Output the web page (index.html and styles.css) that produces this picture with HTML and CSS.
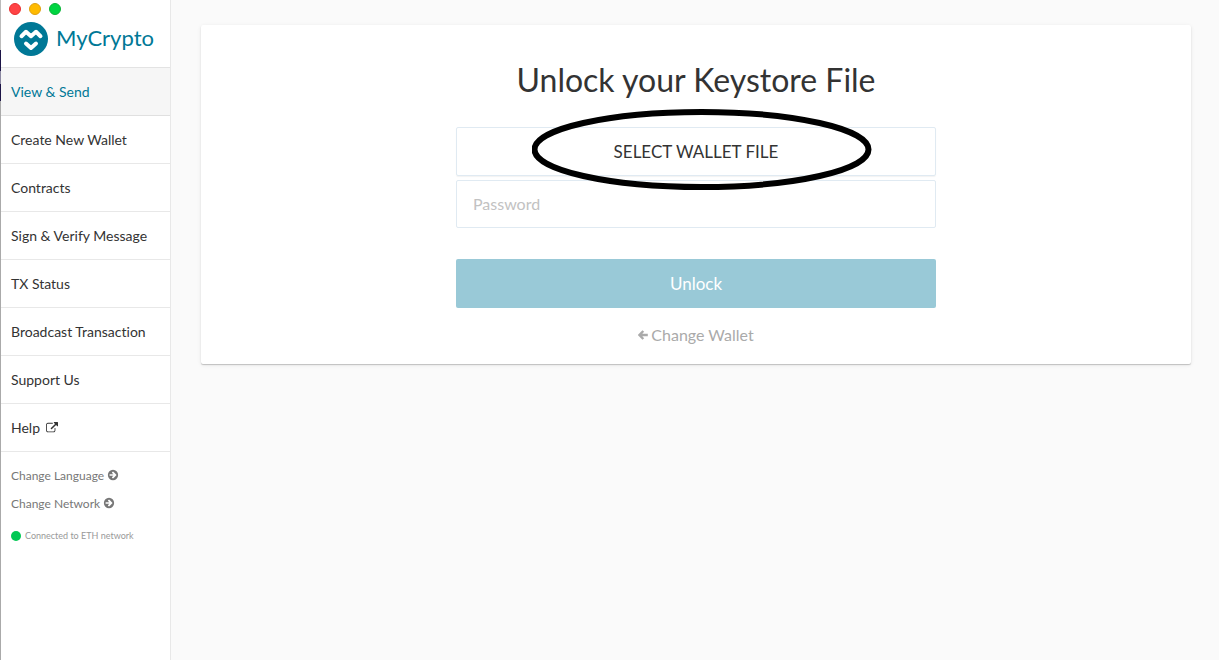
FILE: index.html
```html
<!DOCTYPE html>
<html lang="en">
<head>
<meta charset="utf-8">
<title>MyCrypto</title>
<link rel="stylesheet" href="styles.css">
</head>
<body>
<div class="app">
  <div class="desktop-edge"></div>
  <aside class="sidebar">
    <header class="sidebar-header">
      <div class="window-controls">
        <button class="dot dot-close" type="button" aria-label="Close"></button>
        <button class="dot dot-minimize" type="button" aria-label="Minimize"></button>
        <button class="dot dot-zoom" type="button" aria-label="Zoom"></button>
      </div>
      <a class="logo" href="#">
        <svg class="logo-mark" viewBox="0 0 34 34" aria-hidden="true">
          <circle cx="17" cy="17" r="17" fill="#007896"/>
          <path d="M7.500 14.200 L12 9.800 L17 14.200 L22 9.800 L26.500 14.200" fill="none" stroke="#fff" stroke-width="4" stroke-linecap="round" stroke-linejoin="round"/>
          <path d="M12 21.500 L17 26 L22 21.500" fill="none" stroke="#fff" stroke-width="4" stroke-linecap="round" stroke-linejoin="round"/>
        </svg>
        <span class="logo-text">MyCrypto</span>
      </a>
    </header>
    <nav class="nav">
      <a class="nav-item active" href="#">View &amp; Send</a>
      <a class="nav-item" href="#">Create New Wallet</a>
      <a class="nav-item" href="#">Contracts</a>
      <a class="nav-item" href="#">Sign &amp; Verify Message</a>
      <a class="nav-item" href="#">TX Status</a>
      <a class="nav-item" href="#">Broadcast Transaction</a>
      <a class="nav-item" href="#">Support Us</a>
      <a class="nav-item" href="#">Help
        <svg class="icon-external" viewBox="0 0 1792 1792" aria-hidden="true"><path fill="currentColor" d="M1408 928v320q0 119-84.500 203.500t-203.500 84.500h-832q-119 0-203.500-84.500t-84.500-203.500v-832q0-119 84.500-203.500t203.500-84.500h704q14 0 23 9t9 23v64q0 14-9 23t-23 9h-704q-66 0-113 47t-47 113v832q0 66 47 113t113 47h832q66 0 113-47t47-113v-320q0-14 9-23t23-9h64q14 0 23 9t9 23zm384-864v512q0 26-19 45t-45 19-45-19l-176-176-652 652q-10 10-23 10t-23-10l-114-114q-10-10-10-23t10-23l652-652-176-176q-19-19-19-45t19-45 45-19h512q26 0 45 19t19 45z"/></svg>
      </a>
    </nav>
    <div class="options">
      <button class="option" type="button">Change Language
        <svg class="icon-circle" viewBox="0 0 1792 1792" aria-hidden="true"><path fill="currentColor" fill-rule="evenodd" d="M896 128a768 768 0 1 0 0 1536a768 768 0 1 0 0-1536zM1413 896q0 27-18 45l-362 362-91 91q-18 18-45 18t-45-18l-91-91q-18-18-18-45t18-45l189-189h-502q-26 0-45-19t-19-45v-128q0-26 19-45t45-19h502l-189-189q-19-19-19-45t19-45l91-91q18-18 45-18t45 18l91 91 362 362q18 18 18 45z"/></svg>
      </button>
      <button class="option" type="button">Change Network
        <svg class="icon-circle" viewBox="0 0 1792 1792" aria-hidden="true"><path fill="currentColor" fill-rule="evenodd" d="M896 128a768 768 0 1 0 0 1536a768 768 0 1 0 0-1536zM1413 896q0 27-18 45l-362 362-91 91q-18 18-45 18t-45-18l-91-91q-18-18-18-45t18-45l189-189h-502q-26 0-45-19t-19-45v-128q0-26 19-45t45-19h502l-189-189q-19-19-19-45t19-45l91-91q18-18 45-18t45 18l91 91 362 362q18 18 18 45z"/></svg>
      </button>
    </div>
    <p class="status"><span class="status-dot"></span>Connected to ETH network</p>
  </aside>
  <main class="main">
    <section class="card">
      <h1 class="title">Unlock your Keystore File</h1>
      <form class="form">
        <div class="select-wrap">
          <button class="select-file" type="button">SELECT WALLET FILE</button>
          <svg class="highlight" viewBox="0 0 340 81" aria-hidden="true"><ellipse cx="169.500" cy="40.500" rx="167" ry="37.500" fill="none" stroke="#000" stroke-width="6"/></svg>
        </div>
        <input class="password" type="password" placeholder="Password" aria-label="Password">
        <button class="unlock" type="submit" disabled>Unlock</button>
      </form>
      <button class="change-wallet" type="button">
        <svg class="icon-arrow" viewBox="0 0 10 10" aria-hidden="true"><path d="M5.300 1 L1.500 5 L5.300 9 M2 5 H9.800" fill="none" stroke="currentColor" stroke-width="2.400"/></svg>
        Change Wallet
      </button>
    </section>
  </main>
</div>
</body>
</html>
```

FILE: styles.css
```css
* {
  box-sizing: border-box;
}

body {
  margin: 0;
  background: #fafafa;
  color: #333;
  font-family: Lato, "Open Sans", sans-serif;
  font-size: 14px;
  font-variant-ligatures: none;
}

a {
  color: inherit;
  text-decoration: none;
}

button {
  border: 0;
  background: none;
  padding: 0;
  color: inherit;
  font: inherit;
}

.app {
  display: flex;
  min-height: 100vh;
}

.desktop-edge {
  width: 1px;
  background: linear-gradient(#bbb 0 50px, #1c1446 50px 71px, #8a87a0 71px 84px, #1c1446 84px 101px, #aaa 101px);
}

.sidebar {
  width: 170px;
  flex: none;
  background: #fff;
  border-right: 1px solid #e8e8e8;
}

.sidebar-header {
  height: 68px;
  border-bottom: 1px solid #e3e3e3;
}

.window-controls {
  display: flex;
  gap: 8px;
  padding: 3px 8px 0;
}

.dot {
  width: 12px;
  height: 12px;
  border-radius: 50%;
  border: 1px solid;
}

.dot-close {
  background: #ff4345;
  border-color: #e8302f;
}

.dot-minimize {
  background: #ffbb00;
  border-color: #dfa010;
}

.dot-zoom {
  background: #00d541;
  border-color: #0ab337;
}

.logo {
  display: flex;
  align-items: center;
  gap: 8px;
  padding: 7px 0 0 13px;
  color: #007896;
}

.logo-mark {
  width: 34px;
  height: 34px;
}

.logo-text {
  padding-bottom: 2px;
  font-size: 22px;
  line-height: 32px;
}

.nav-item {
  display: flex;
  align-items: center;
  gap: 6px;
  height: 48px;
  padding-left: 10px;
  border-bottom: 1px solid #e8e8e8;
  line-height: 20px;
}

.nav-item.active {
  background: #f6f6f6;
  border-color: #e0e0e0;
  color: #007896;
}

.icon-external {
  width: 12px;
  height: 12px;
}

.options {
  padding: 9px 0 0 10px;
}

.option {
  display: flex;
  align-items: center;
  gap: 3px;
  height: 28px;
  color: #777;
  font-size: 12px;
}

.icon-circle {
  width: 12px;
  height: 12px;
}

.status {
  display: flex;
  align-items: center;
  gap: 4px;
  margin: 9px 0 0;
  padding-left: 10px;
  color: #999;
  font-size: 9px;
  line-height: 20px;
}

.status-dot {
  width: 10px;
  height: 10px;
  border-radius: 50%;
  background: #00c853;
}

.main {
  flex: 1;
  padding: 25px 28px 25px 30px;
}

.card {
  display: flex;
  flex-direction: column;
  align-items: center;
  padding: 35px 16px 17px;
  background: #fff;
  border-radius: 2px;
  box-shadow: 0 1px 1px rgba(0, 0, 0, 0.2), 0 1px 4px rgba(0, 0, 0, 0.08);
}

.title {
  margin: 0 0 27px;
  font-size: 32px;
  font-weight: 400;
  line-height: 40px;
}

.form {
  display: flex;
  flex-direction: column;
  width: 100%;
  max-width: 480px;
}

.select-wrap {
  position: relative;
}

.select-file {
  display: block;
  width: 100%;
  height: 49px;
  border: 1px solid #e0eaf2;
  border-radius: 2px;
  box-shadow: 0 1px 1px rgba(0, 0, 0, 0.05);
  font-size: 17px;
}

.highlight {
  position: absolute;
  top: -18px;
  left: 76px;
  width: 340px;
  height: 81px;
  pointer-events: none;
}

.password {
  height: 48px;
  margin-top: 4px;
  padding: 0 16px 2px;
  border: 1px solid #e0eaf2;
  border-radius: 2px;
  background: #fff;
  font: inherit;
  font-size: 16px;
}

.password::placeholder {
  color: #c2c2c2;
}

.unlock {
  height: 49px;
  margin-top: 31px;
  border-radius: 2px;
  background: #99c9d7;
  color: #fff;
  font-size: 17px;
}

.change-wallet {
  display: flex;
  align-items: center;
  gap: 3px;
  margin-top: 14px;
  color: #aaa;
  font-size: 16px;
  line-height: 25px;
}

.icon-arrow {
  width: 10px;
  height: 10px;
}
```
